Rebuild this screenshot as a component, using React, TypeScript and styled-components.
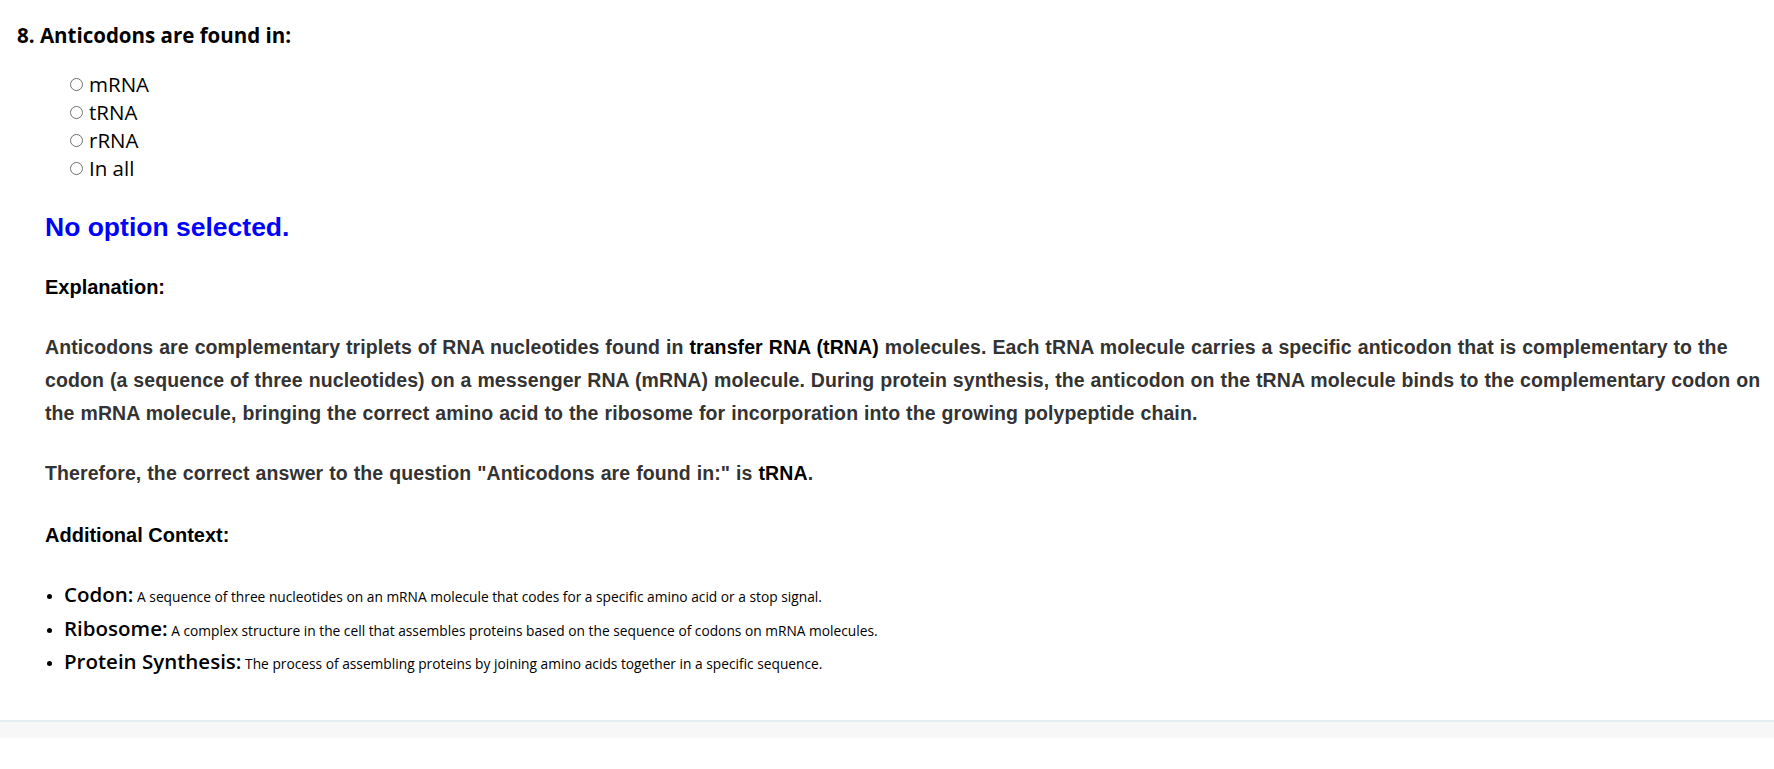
import React from "react";
import styled, { createGlobalStyle } from "styled-components";

const Global = createGlobalStyle`
  html, body { margin: 0; padding: 0; background: #fff; }
  body { font-family: "Open Sans", "Noto Sans", sans-serif; color: #000; }
`;

const Page = styled.div`
  display: flex;
  flex-direction: column;
  min-height: 769px;
`;

const Question = styled.section`
  padding: 22px 4px 0 17px;
`;

const Title = styled.h3`
  margin: 0;
  font-family: "Open Sans", sans-serif;
  font-weight: 700;
  font-size: 20.5px;
  line-height: 26px;
  color: #000;
`;

const Options = styled.div`
  display: flex;
  flex-direction: column;
  margin: 22px 0 0 53px;
`;

const Option = styled.label`
  display: flex;
  align-items: center;
  gap: 6px;
  height: 28px;
  font-family: "Open Sans", sans-serif;
  font-size: 20.5px;
  color: #000;
`;

const Radio = styled.span`
  width: 13px;
  height: 13px;
  border: 1px solid #6f6f6f;
  border-radius: 50%;
  box-sizing: border-box;
  flex: none;
`;

const Answer = styled.div`
  margin: 29px 0 0 28px;
  font-family: "Liberation Sans", Arial, sans-serif;
`;

const Status = styled.div`
  font-weight: 700;
  font-size: 26.5px;
  line-height: 32px;
  color: #0000ff;
`;

const Heading = styled.h4<{ $top: number }>`
  margin: ${(p) => p.$top}px 0 0;
  font-weight: 700;
  font-size: 20px;
  line-height: 26px;
  color: #000;
`;

const Para = styled.p<{ $top: number }>`
  margin: ${(p) => p.$top}px 0 0;
  font-weight: 700;
  font-size: 19.5px;
  line-height: 33px;
  letter-spacing: 0.1px;
  word-spacing: 0.4px;
  color: #333;
  strong { color: #000; }
`;

const List = styled.ul`
  margin: 32px 0 0;
  padding: 0 0 0 19px;
  font-family: "Open Sans", sans-serif;
`;

const Item = styled.li`
  font-size: 14px;
  line-height: 33.5px;
  height: 33.5px;
  color: #000;
`;

const Term = styled.span`
  font-size: 20.5px;
  font-weight: 600;
  line-height: 20px;
`;

const Desc = styled.span`
  font-size: 13.75px;
  line-height: 14px;
`;

const Spacer = styled.div`
  height: 39px;
`;

const Footer = styled.footer`
  border-top: 2px solid #e3eef1;
  background: #f7f7f7;
  height: 16px;
`;

const options = ["mRNA", "tRNA", "rRNA", "In all"];

const context = [
  ["Codon:", "A sequence of three nucleotides on an mRNA molecule that codes for a specific amino acid or a stop signal."],
  ["Ribosome:", "A complex structure in the cell that assembles proteins based on the sequence of codons on mRNA molecules."],
  ["Protein Synthesis:", "The process of assembling proteins by joining amino acids together in a specific sequence."],
];

export default function App() {
  return (
    <Page>
      <Global />
      <Question>
        <Title>8. Anticodons are found in:</Title>
        <Options>
          {options.map((o) => (
            <Option key={o}>
              <Radio />
              {o}
            </Option>
          ))}
        </Options>
        <Answer>
          <Status>No option selected.</Status>
          <Heading $top={31}>Explanation:</Heading>
          <Para $top={31}>
            Anticodons are complementary triplets of RNA nucleotides found in <strong>transfer RNA (tRNA)</strong> molecules. Each tRNA molecule carries a specific anticodon that is complementary to the codon (a sequence of three nucleotides) on a messenger RNA (mRNA) molecule. During protein synthesis, the anticodon on the tRNA molecule binds to the complementary codon on the mRNA molecule, bringing the correct amino acid to the ribosome for incorporation into the growing polypeptide chain.
          </Para>
          <Para $top={27}>
            Therefore, the correct answer to the question "Anticodons are found in:" is <strong>tRNA</strong>.
          </Para>
          <Heading $top={32}>Additional Context:</Heading>
          <List>
            {context.map(([t, d]) => (
              <Item key={t}>
                <Term>{t}</Term> <Desc>{d}</Desc>
              </Item>
            ))}
          </List>
        </Answer>
      </Question>
      <Spacer />
      <Footer />
    </Page>
  );
}
